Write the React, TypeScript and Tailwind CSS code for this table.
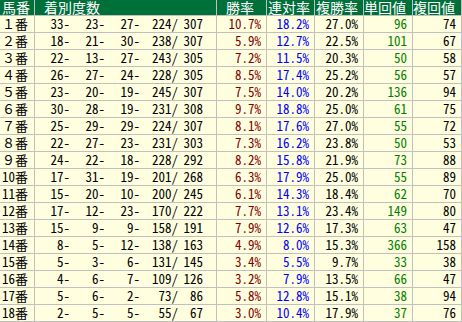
const ROWS: [string, number, number, number, number, number, string, string, string, number, number][] = [
  ['１番', 33, 23, 27, 224, 307, '10.7', '18.2', '27.0', 96, 74],
  ['２番', 18, 21, 30, 238, 307, '5.9', '12.7', '22.5', 101, 67],
  ['３番', 22, 13, 27, 243, 305, '7.2', '11.5', '20.3', 50, 58],
  ['４番', 26, 27, 24, 228, 305, '8.5', '17.4', '25.2', 56, 57],
  ['５番', 23, 20, 19, 245, 307, '7.5', '14.0', '20.2', 136, 94],
  ['６番', 30, 28, 19, 231, 308, '9.7', '18.8', '25.0', 61, 75],
  ['７番', 25, 29, 29, 224, 307, '8.1', '17.6', '27.0', 55, 72],
  ['８番', 22, 27, 23, 231, 303, '7.3', '16.2', '23.8', 50, 53],
  ['９番', 24, 22, 18, 228, 292, '8.2', '15.8', '21.9', 73, 88],
  ['10番', 17, 31, 19, 201, 268, '6.3', '17.9', '25.0', 55, 89],
  ['11番', 15, 20, 10, 200, 245, '6.1', '14.3', '18.4', 62, 70],
  ['12番', 17, 12, 23, 170, 222, '7.7', '13.1', '23.4', 149, 80],
  ['13番', 15, 9, 9, 158, 191, '7.9', '12.6', '17.3', 63, 47],
  ['14番', 8, 5, 12, 138, 163, '4.9', '8.0', '15.3', 366, 158],
  ['15番', 5, 3, 6, 131, 145, '3.4', '5.5', '9.7', 33, 38],
  ['16番', 4, 6, 7, 109, 126, '3.2', '7.9', '13.5', 66, 47],
  ['17番', 5, 6, 2, 73, 86, '5.8', '12.8', '15.1', 38, 94],
  ['18番', 2, 5, 5, 55, 67, '3.0', '10.4', '17.9', 37, 76],
]

const FONT = "font-['Noto_Sans_Mono_CJK_JP','DejaVu_Sans_Mono','Noto_Sans_CJK_JP',monospace]"

function Head({ children, pad }: { children: React.ReactNode; pad: string }) {
  return (
    <div className={`bg-[#00703a] text-white text-[14px] leading-[15px] whitespace-nowrap ${pad}`}>
      {children}
    </div>
  )
}

function Num({ children, color }: { children: React.ReactNode; color: string }) {
  return (
    <div className={`bg-[#ffffe0] text-right pr-[5px] text-[13px] leading-[16px] whitespace-nowrap ${color}`}>
      {children}
    </div>
  )
}

export default function App() {
  return (
    <div className={`w-[462px] bg-[#c0c0c0] pr-px pb-px ${FONT}`}>
      <div className="grid grid-cols-[34px_181px_49px_47px_48px_48px_48px] grid-rows-[15px_repeat(18,16px)] gap-px">
        <Head pad="pl-[2px]">馬番</Head>
        <Head pad="pl-[9px]">着別度数</Head>
        <Head pad="pl-[9px]">勝率</Head>
        <Head pad="pl-px">連対率</Head>
        <Head pad="pl-px">複勝率</Head>
        <Head pad="pl-0">単回値</Head>
        <Head pad="pl-0">複回値</Head>

        {ROWS.map((r) => (
          <div key={r[0]} className="contents">
            <div className="bg-[#ffffe0] pl-[2px] text-[13px] leading-[16px] text-black whitespace-nowrap">{r[0]}</div>
            <div className="bg-[#ffffe0] flex text-[13px] leading-[16px] text-black whitespace-nowrap">
              <span className="w-[35px] text-right">{r[1]}-</span>
              <span className="w-[35px] text-right">{r[2]}-</span>
              <span className="w-[35px] text-right">{r[3]}-</span>
              <span className="w-[38px] text-right">{r[4]}/</span>
              <span className="w-[25px] text-right">{r[5]}</span>
            </div>
            <Num color="text-[#800000]">{r[6]}%</Num>
            <Num color="text-[#0000ff]">{r[7]}%</Num>
            <Num color="text-black">{r[8]}%</Num>
            <Num color="text-[#008000]">{r[9]}</Num>
            <Num color="text-black">{r[10]}</Num>
          </div>
        ))}
      </div>
    </div>
  )
}
